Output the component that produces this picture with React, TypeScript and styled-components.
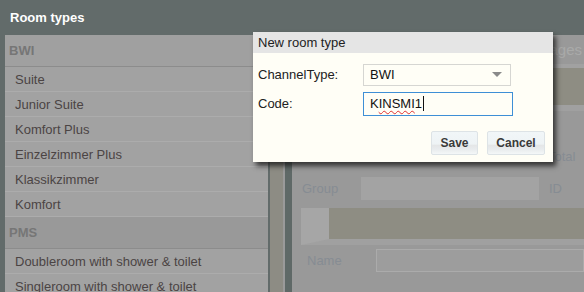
import { FC } from "react";
import styled, { createGlobalStyle } from "styled-components";

const GlobalStyle = createGlobalStyle`
  html, body {
    margin: 0;
    padding: 0;
    background: #626b6a;
  }
  body {
    font-family: "Liberation Sans", Arial, sans-serif;
    font-size: 13px;
  }
`;

const Page = styled.div`
  position: relative;
  width: 584px;
  height: 292px;
  overflow: hidden;
  display: flex;
  flex-direction: column;
  background: #626b6a;
`;

const Header = styled.div`
  height: 35px;
  flex-shrink: 0;
  display: flex;
  align-items: center;
  padding-left: 10px;
  color: #ffffff;
  font-weight: 700;
  font-size: 13px;
`;

const Main = styled.div`
  flex: 1;
  display: flex;
  padding-left: 5px;
  min-height: 0;
`;

const LeftPanel = styled.div`
  width: 263px;
  flex-shrink: 0;
  display: flex;
  flex-direction: column;
  background: #a2a2a2;
`;

const SectionHeader = styled.div<{ $shade: string }>`
  height: 31px;
  flex-shrink: 0;
  display: flex;
  align-items: center;
  padding-left: 4px;
  background: ${(p) => p.$shade};
  border-bottom: 1px solid #8c8c8c;
  color: #767676;
  font-weight: 700;
  font-size: 13px;
`;

const Item = styled.div`
  height: 24px;
  flex-shrink: 0;
  display: flex;
  align-items: center;
  padding-left: 10px;
  border-bottom: 1px solid #acacac;
  color: #4b4444;
  font-size: 13px;
  white-space: nowrap;
`;

const ScrollTrack = styled.div`
  width: 13px;
  flex-shrink: 0;
  margin-left: 2px;
  background: #8d8c84;
  border-right: 2px solid #9a9a9a;
`;

const Gutter = styled.div`
  width: 7px;
  flex-shrink: 0;
  background: #5f6967;
`;

const RightPanel = styled.div`
  flex: 1;
  background: #999999;
  display: flex;
  flex-direction: column;
  min-width: 0;
  overflow: hidden;
`;

const PanelTitle = styled.div`
  height: 29px;
  flex-shrink: 0;
  display: flex;
  align-items: center;
  justify-content: flex-end;
  padding-right: 2px;
  color: #a9aaa9;
  font-size: 15px;
  border-bottom: 4px solid #a1a1a1;
`;

const OliveBlock = styled.div<{ $h: number; $lead?: number }>`
  height: ${(p) => p.$h}px;
  flex-shrink: 0;
  background: #8e8d83;
  border-bottom: 6px solid #a0a0a0;
  ${(p) => (p.$lead ? `border-left: ${p.$lead}px solid #a6a6a6;` : "")}
`;

const TotalRow = styled.div`
  height: 66px;
  flex-shrink: 0;
  box-sizing: border-box;
  padding: 38px 0 0 256px;
`;

const FieldRow = styled.div<{ $pad: number }>`
  display: flex;
  align-items: center;
  padding-left: ${(p) => p.$pad}px;
  flex-shrink: 0;
`;

const DimLabel = styled.span<{ $w: number }>`
  width: ${(p) => p.$w}px;
  flex-shrink: 0;
  color: #868c93;
  font-size: 13px;
`;

const DimInput = styled.div<{ $w?: number; $bordered?: boolean }>`
  height: ${(p) => (p.$bordered ? 21 : 23)}px;
  ${(p) => (p.$w ? `width: ${p.$w}px;` : "flex: 1;")}
  flex-shrink: 0;
  background: #a3a3a3;
  ${(p) => (p.$bordered ? "border: 1px solid #ababab; background: #9d9d9d;" : "")}
`;

const Spacer = styled.div<{ $h: number }>`
  height: ${(p) => p.$h}px;
  flex-shrink: 0;
`;

const Overlay = styled.div`
  position: absolute;
  left: 253px;
  top: 32px;
  width: 300px;
  height: 130px;
  background: #fffef6;
  box-shadow: 3px 4px 5px rgba(20, 20, 20, 0.75);
  display: flex;
  flex-direction: column;
`;

const DialogTitle = styled.div`
  height: 21px;
  display: flex;
  align-items: center;
  padding-left: 5px;
  background: #e5e5e5;
  color: #222222;
  font-size: 13px;
`;

const DialogBody = styled.div`
  display: flex;
  flex-direction: column;
  padding: 10px 0 0 5px;
  gap: 6px;
`;

const FormRow = styled.div`
  display: flex;
  align-items: center;
  height: 23px;
`;

const FormLabel = styled.span`
  width: 105px;
  color: #222222;
  font-size: 13px;
`;

const SelectBox = styled.div`
  width: 148px;
  height: 22px;
  box-sizing: border-box;
  border: 1px solid #d6d6d2;
  background: #fffef6;
  display: flex;
  align-items: center;
  justify-content: space-between;
  padding: 0 8px 0 6px;
  color: #111111;
  font-size: 13px;
`;

const Arrow = styled.span`
  width: 0;
  height: 0;
  border-left: 5px solid transparent;
  border-right: 5px solid transparent;
  border-top: 5px solid #8a8a8a;
`;

const TextBox = styled.div`
  width: 150px;
  height: 24px;
  box-sizing: border-box;
  border: 1px solid #3e8fd6;
  background: #fffef6;
  display: flex;
  align-items: center;
  padding-left: 6px;
  color: #111111;
  font-size: 13px;
`;

const Misspelled = styled.span`
  text-decoration: underline wavy #e03030;
  text-decoration-thickness: 1px;
  text-underline-offset: 2px;
`;

const Caret = styled.span`
  display: inline-block;
  width: 1px;
  height: 15px;
  margin-left: 1px;
  background: #111111;
`;

const ButtonBar = styled.div`
  display: flex;
  justify-content: flex-end;
  gap: 9px;
  padding: 16px 8px 0 0;
`;

const Button = styled.div<{ $w: number }>`
  width: ${(p) => p.$w}px;
  height: 24px;
  box-sizing: border-box;
  border: 1px solid #dde3e6;
  border-radius: 2px;
  background: linear-gradient(#f1f6f8 0%, #eef3f5 55%, #e4e6e7 60%, #e9ecee 80%, #f4f7f8 100%);
  display: flex;
  align-items: center;
  justify-content: center;
  color: #3a3a3a;
  font-weight: 700;
  font-size: 12px;
`;

const bwi = ["Suite", "Junior Suite", "Komfort Plus", "Einzelzimmer Plus", "Klassikzimmer", "Komfort"];
const pms = ["Doubleroom with shower & toilet", "Singleroom with shower & toilet"];

const App: FC = () => {
  return (
    <>
      <GlobalStyle />
      <Page>
        <Header>Room types</Header>
        <Main>
          <LeftPanel>
            <SectionHeader $shade="#a0a0a0">BWI</SectionHeader>
            {bwi.map((name) => (
              <Item key={name}>{name}</Item>
            ))}
            <SectionHeader $shade="#999999">PMS</SectionHeader>
            {pms.map((name) => (
              <Item key={name}>{name}</Item>
            ))}
          </LeftPanel>
          <ScrollTrack />
          <Gutter />
          <RightPanel>
            <PanelTitle>Images</PanelTitle>
            <OliveBlock $h={37} />
            <TotalRow>
              <DimLabel $w={40}>Total</DimLabel>
            </TotalRow>
            <FieldRow $pad={10}>
              <DimLabel $w={59}>Group</DimLabel>
              <DimInput $w={178} />
              <DimLabel $w={30} style={{ marginLeft: 10 }}>ID</DimLabel>
            </FieldRow>
            <Spacer $h={8} />
            <OliveBlock $h={31} $lead={28} style={{ marginLeft: 9 }} />
            <Spacer $h={4} />
            <FieldRow $pad={15}>
              <DimLabel $w={69}>Name</DimLabel>
              <DimInput $bordered />
            </FieldRow>
          </RightPanel>
        </Main>
        <Overlay>
          <DialogTitle>New room type</DialogTitle>
          <DialogBody>
            <FormRow>
              <FormLabel>ChannelType:</FormLabel>
              <SelectBox>
                BWI
                <Arrow />
              </SelectBox>
            </FormRow>
            <FormRow>
              <FormLabel>Code:</FormLabel>
              <TextBox>
                K<Misspelled>INSMI</Misspelled>1
                <Caret />
              </TextBox>
            </FormRow>
          </DialogBody>
          <ButtonBar>
            <Button $w={47}>Save</Button>
            <Button $w={58}>Cancel</Button>
          </ButtonBar>
        </Overlay>
      </Page>
    </>
  );
};

export default App;
